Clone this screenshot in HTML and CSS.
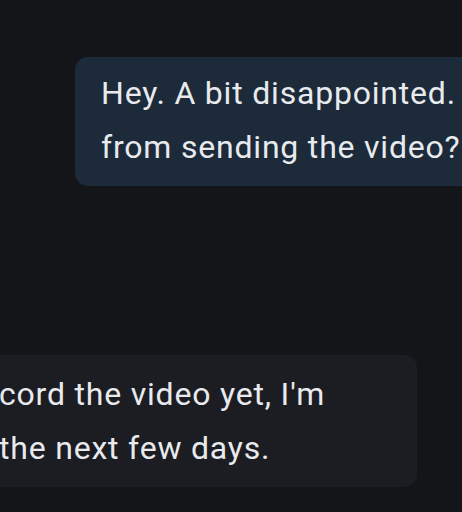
FILE: index.html
```html
<!DOCTYPE html>
<html lang="en">
<head>
  <meta charset="UTF-8">
  <meta name="viewport" content="width=device-width, initial-scale=1.0">
  <title>Chat</title>
  <link rel="stylesheet" href="styles.css">
</head>
<body>
  <div class="chat">
    <div class="message sent">
      Hey. A bit disappointed.<br>
      from sending the video?
    </div>

    <div class="message received">
      cord the video yet, I'm<br>
      the next few days.
    </div>
  </div>
</body>
</html>
```

FILE: styles.css
```css
html, body {
  margin: 0;
  padding: 0;
  height: 100%;
  overflow: hidden;
}

body {
  font-family: Roboto, "Noto Sans", sans-serif;
  background-color: #141519;
  color: #e8eaed;
}

.chat {
  display: flex;
  flex-direction: column;
  gap: 169px;
  padding-top: 57px;
}

.message {
  font-size: 32px;
  letter-spacing: 0.8px;
  line-height: 54px;
  border-radius: 13px;
  box-sizing: border-box;
  white-space: nowrap;
}

.sent {
  align-self: flex-start;
  margin-left: 75px;
  width: 480px;
  padding: 9px 26px 12px 26px;
  background-color: #1c2a3a;
}

.received {
  align-self: flex-start;
  margin-left: -27px;
  width: 444px;
  padding: 12px 26px 12px 26px;
  background-color: #1c1d22;
}
```
